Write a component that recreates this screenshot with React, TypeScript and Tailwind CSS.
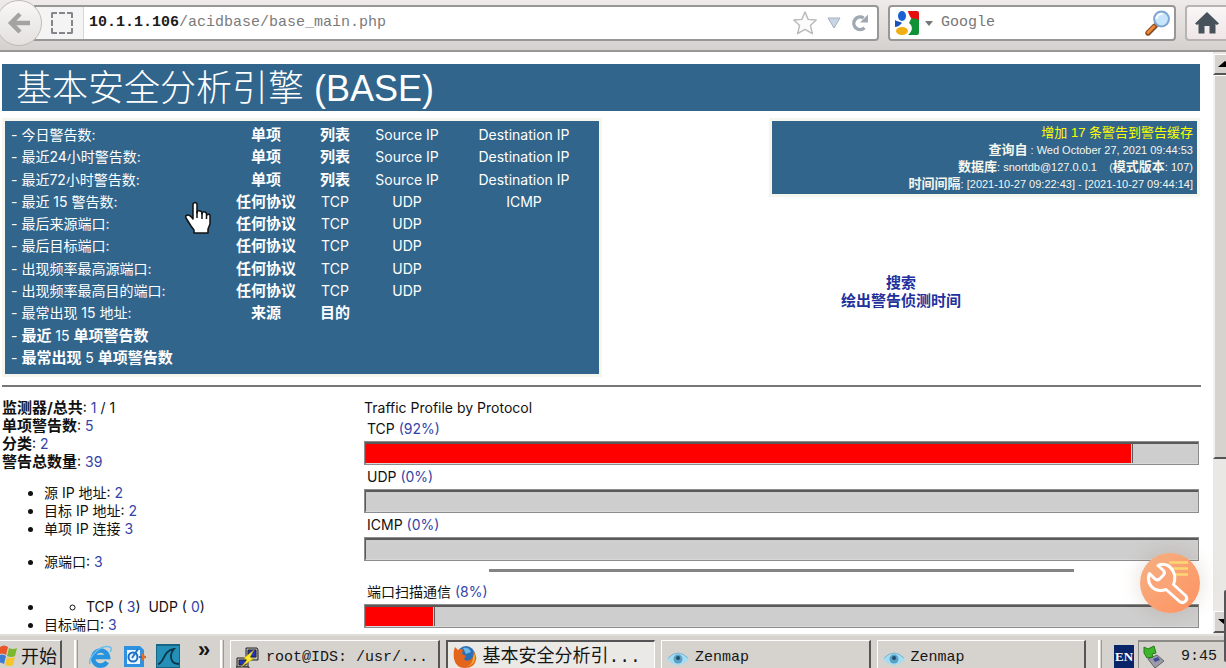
import type { ReactNode } from "react";

type Cell = { text: string; bold?: boolean };

const b = (text: string): Cell => ({ text, bold: true });
const t = (text: string): Cell => ({ text });

const SUMMARY_ROWS: { label: ReactNode; cells: Cell[] }[] = [
  { label: "今日警告数:", cells: [b("单项"), b("列表"), t("Source IP"), t("Destination IP")] },
  { label: "最近24小时警告数:", cells: [b("单项"), b("列表"), t("Source IP"), t("Destination IP")] },
  { label: "最近72小时警告数:", cells: [b("单项"), b("列表"), t("Source IP"), t("Destination IP")] },
  { label: "最近 15 警告数:", cells: [b("任何协议"), t("TCP"), t("UDP"), t("ICMP")] },
  { label: "最后来源端口:", cells: [b("任何协议"), t("TCP"), t("UDP")] },
  { label: "最后目标端口:", cells: [b("任何协议"), t("TCP"), t("UDP")] },
  { label: "出现频率最高源端口:", cells: [b("任何协议"), t("TCP"), t("UDP")] },
  { label: "出现频率最高目的端口:", cells: [b("任何协议"), t("TCP"), t("UDP")] },
  { label: "最常出现 15 地址:", cells: [b("来源"), b("目的")] },
  { label: <a href="#last"><b className="text-[15px]">最近</b> 15 <b className="text-[15px]">单项警告数</b></a>, cells: [] },
  { label: <a href="#freq"><b className="text-[15px]">最常出现</b> 5 <b className="text-[15px]">单项警告数</b></a>, cells: [] },
];

function BackIcon() {
  return (
    <svg viewBox="0 0 24 24" className="h-6 w-6" fill="none" stroke="#a3a3a3" strokeWidth="4.5">
      <path d="M23 12H5M13 3l-9 9 9 9" />
    </svg>
  );
}

function StarIcon() {
  return (
    <svg viewBox="0 0 24 24" className="h-6 w-6" fill="#fbfbfb" stroke="#b9b9bb" strokeWidth="1.4" strokeLinejoin="round">
      <path d="M12 1l3.200 7.400 8 .6-5.800 5.400 2 8.200L12 18.400l-7.400 4.200 2-8.200L.8 9l8-.6z" />
    </svg>
  );
}

function ReloadIcon() {
  return (
    <svg viewBox="0 0 18 18" className="h-[18px] w-[18px]" fill="none">
      <path d="M13.500 13.800A6.300 6.300 0 1 1 12.600 4" stroke="#a0a8b1" strokeWidth="3.400" />
      <path d="M17 .5v8H9z" fill="#a0a8b1" />
    </svg>
  );
}

function GoogleIcon() {
  return (
    <svg viewBox="0 0 24 24" className="h-6 w-6">
      <path d="M13 0h9q2 0 2 2v7h-7c-1-3-3-4-4-9z" fill="#e60f10" />
      <path d="M16 8c3-1 6 0 8 1v13q0 2-2 2h-9c5-4 5-9 1-12z" fill="#0f9236" />
      <path d="M0 9c2 2 5 1 7 3-3 3-5 4-7 4z" fill="#1a51bd" />
      <ellipse cx="7" cy="5" rx="4" ry="5" fill="#1b60d2" />
      <ellipse cx="7" cy="20" rx="6" ry="4" fill="#f0ae12" />
    </svg>
  );
}

function MagnifierIcon() {
  return (
    <svg viewBox="0 0 26 26" className="h-[26px] w-[26px]">
      <path d="M3 23l7-7" stroke="#8a4a20" strokeWidth="5.400" strokeLinecap="round" />
      <path d="M3 22.500l6-6" stroke="#e8893d" strokeWidth="3" strokeLinecap="round" />
      <circle cx="16.500" cy="9" r="7.400" fill="#c8e6fb" stroke="#7fa6d2" strokeWidth="2" />
      <path d="M11.500 9a5 5 0 0 1 6-5" stroke="#fff" strokeWidth="2" fill="none" />
    </svg>
  );
}

function HomeIcon() {
  return (
    <svg viewBox="0 0 24 22" className="h-[22px] w-6" fill="#48525a">
      <path d="M12 0l12 11.500-2 1.500-1.500-1v9.500h-6V14h-5v7.500h-6V12L2 13l-2-1.500z" />
    </svg>
  );
}

function Toolbar() {
  return (
    <header className="flex h-[52px] shrink-0 items-start border-b-2 border-[#9a9693] bg-linear-to-b from-[#eeebea] to-[#d5d1ce]">
      <button aria-label="Back" className="relative z-10 -ml-1 flex h-[46px] w-[46px] shrink-0 items-center justify-center rounded-full border border-[#bdbab8] bg-linear-to-b from-[#f8f7f6] to-[#e4e1df]">
        <BackIcon />
      </button>
      <div className="mt-[5px] -ml-2 flex h-9 flex-1 items-center rounded-r border-2 border-[#989696] bg-white font-['Liberation_Mono',monospace] text-[15px]">
        <div className="flex h-full w-12 shrink-0 items-center justify-end border-r border-[#d8d6d6] bg-[#f5f4f4] pr-[10px]">
          <span className="h-[22px] w-[22px] rounded-xs border-2 border-dashed border-[#85858b]" />
        </div>
        <label htmlFor="url" className="pl-[5px] font-bold text-[#1c1c1c]">10.1.1.106</label>
        <input id="url" defaultValue="/acidbase/base_main.php" className="min-w-0 flex-1 text-[#7b7b7b] outline-none" />
        <div className="flex items-center gap-[10px] pr-2">
          <button aria-label="Bookmark"><StarIcon /></button>
          <button aria-label="History">
            <svg viewBox="0 0 14 12" className="h-3 w-[14px]"><path d="M1 1h12L7 11z" fill="#c9d5e5" stroke="#a4b0c0" /></svg>
          </button>
          <button aria-label="Reload"><ReloadIcon /></button>
        </div>
      </div>
      <div className="mt-[5px] ml-[9px] flex h-9 w-[288px] items-center rounded border-2 border-[#989696] bg-white pr-[3px] pl-[5px] font-['Liberation_Mono',monospace] text-[15px]">
        <GoogleIcon />
        <svg viewBox="0 0 8 5" className="mx-[6px] h-[5px] w-2"><path d="M0 0h8L4 5z" fill="#777" /></svg>
        <input aria-label="Search" placeholder="Google" className="ml-[2px] min-w-0 flex-1 outline-none placeholder:text-[#777]" />
        <button aria-label="Go"><MagnifierIcon /></button>
      </div>
      <button aria-label="Home" className="mt-[5px] ml-[9px] flex h-9 w-[41px] items-center justify-center rounded-l border-2 border-r-0 border-[#b9b4b4] bg-linear-to-b from-[#f8f6f6] to-[#f0e6e8]">
        <HomeIcon />
      </button>
    </header>
  );
}

function SummaryTable() {
  return (
    <div className="w-[600px] shrink-0 border-3 border-[#f5f6ee] bg-[#31658c] pt-[3px] pb-[5px]">
      <table className="h-[245px] w-full table-fixed text-center text-white">
        <colgroup>
          <col className="w-[222px]" />
          <col className="w-[78px]" />
          <col className="w-[60px]" />
          <col className="w-[84px]" />
          <col />
        </colgroup>
        <tbody>
          {SUMMARY_ROWS.map((row, i) => (
            <tr key={i}>
              <td className="pl-[6px] text-left leading-5 whitespace-nowrap">- {row.label}</td>
              {[0, 1, 2, 3].map((c) => {
                const cell = row.cells[c];
                return (
                  <td key={c} className="leading-5 whitespace-nowrap">
                    {cell && <a href="#query" className={cell.bold ? "text-[15px] font-bold" : ""}>{cell.text}</a>}
                  </td>
                );
              })}
            </tr>
          ))}
        </tbody>
      </table>
    </div>
  );
}

function StatusPanel() {
  return (
    <div className="flex flex-1 flex-col items-end pr-px">
      <div className="w-[431px] border-3 border-[#f5f6ee] bg-[#31658c] px-1 pt-[3px] pb-[2px] text-right font-['Liberation_Sans','Noto_Sans_CJK_SC',sans-serif] text-[11px] leading-[17px] text-[#f5f6ee]">
        <p className="h-[17px] text-[13px] text-[#ffff00]">增加 17 条警告到警告缓存</p>
        <p className="h-[17px]"><b className="text-[13px]">查询自</b> : Wed October 27, 2021 09:44:53</p>
        <p className="h-[17px]"><b className="text-[13px]">数据库</b>: snortdb@127.0.0.1 &nbsp; &nbsp;(<b className="text-[13px]">模式版本</b>: 107)</p>
        <p className="h-[17px]"><b className="text-[13px]">时间间隔</b>: [2021-10-27 09:22:43] - [2021-10-27 09:44:14]</p>
      </div>
      <div className="mt-[77px] flex w-full flex-col items-center text-[15px] leading-[18px] font-bold text-[#21309c]">
        <a href="#search">搜索</a>
        <a href="#graph">绘出警告侦测时间</a>
      </div>
    </div>
  );
}

function Num({ children }: { children: ReactNode }) {
  return <a href="#detail" className="text-[#3443a8]">{children}</a>;
}

function Stats() {
  return (
    <div className="w-[362px] shrink-0 leading-[18px]">
      <p><b className="text-[15px]">监测器/总共</b>: <Num>1</Num> / 1</p>
      <p><b className="text-[15px]">单项警告数</b>: <Num>5</Num></p>
      <p><b className="text-[15px]">分类</b>: <Num>2</Num></p>
      <p><b className="text-[15px]">警告总数量</b>: <Num>39</Num></p>
      <ul className="mt-[13px] list-disc pl-[42px]">
        <li>源 IP 地址: <Num>2</Num></li>
        <li>目标 IP 地址: <Num>2</Num></li>
        <li>单项 IP 连接 <Num>3</Num></li>
        <li className="mt-[15px]">源端口: <Num>3</Num></li>
        <li className="mt-[27px]">
          <ul className="list-[circle] pl-[42px]">
            <li>TCP ( <Num>3</Num>) &nbsp;UDP ( <Num>0</Num>)</li>
          </ul>
        </li>
        <li>目标端口: <Num>3</Num></li>
      </ul>
    </div>
  );
}

function Bar({ label, percent }: { label: string; percent: number }) {
  return (
    <div>
      <p className="pl-[3px] leading-6">{label} <Num>({percent}%)</Num></p>
      <div className="h-6 border border-[#8c8c8c] bg-[#cecece]">
        <div className="flex h-full border-t-2 border-b border-l border-t-[#5a5a5a] border-b-[#d8d8d8] border-l-[#5a5a5a]">
          <div className="bg-[#ff0000]" style={{ width: `${percent}%` }} />
          {percent > 0 && <div className="w-[2px] border-r border-l border-r-[#5a5a5a] border-l-[#d8d8d8]" />}
        </div>
      </div>
    </div>
  );
}

function TrafficProfile() {
  return (
    <div className="flex-1 pr-px">
      <h2 className="leading-[18px]">Traffic Profile by Protocol</h2>
      <Bar label="TCP" percent={92} />
      <Bar label="UDP" percent={0} />
      <Bar label="ICMP" percent={0} />
      <hr className="mx-auto mt-2 mb-2 w-7/10 border-t-3 border-[#848484]" />
      <Bar label="端口扫描通信" percent={8} />
    </div>
  );
}

function Scrollbar() {
  return (
    <div className="flex w-[13px] shrink-0 flex-col overflow-hidden bg-[#eae8e4]">
      <div className="mt-[2px] flex h-[21px] items-center justify-end border-t border-b-2 border-l-2 border-t-white border-b-[#555] border-l-[#f4f2f0] bg-[#d6d3ce]">
        <svg viewBox="0 0 8 6" className="h-[6px] w-2"><path d="M7 0l7 6H0z" fill="#000" /></svg>
      </div>
      <div className="h-[384px] border-t border-b-2 border-l-2 border-t-white border-b-[#555] border-l-[#f4f2f0] bg-[#d6d3ce]" />
      <div className="flex-1" />
      <div className="mb-px flex h-[22px] items-center justify-end border-t border-b-2 border-l-2 border-t-white border-b-[#555] border-l-[#f4f2f0] bg-[#d6d3ce]">
        <svg viewBox="0 0 8 6" className="h-[6px] w-2"><path d="M0 0h14L7 6z" fill="#000" /></svg>
      </div>
    </div>
  );
}

function HandCursor() {
  return (
    <svg viewBox="0 0 26 34" className="absolute top-[149px] left-[185px] h-[34px] w-[26px]" fill="#fff" stroke="#111" strokeWidth="1.500" strokeLinejoin="round">
      <path d="M8 3q2-3 4 0v9q0-3 3-2 2 0 2 3 1-3 3-2 2 1 2 3 3-2 3 1v8l-2 5v4H9v-3L6 25l-5-8q-1-3 2-3 2 0 5 4z" />
      <path d="M12 10v7M17 12v6M21.500 13v5" />
    </svg>
  );
}

function ToolButton() {
  return (
    <button aria-label="Tools" className="absolute right-[26px] bottom-[55px] flex h-[60px] w-[60px] items-center justify-center rounded-full bg-linear-to-br from-[#f4b184] to-[#ff915f] shadow-[0_0_20px_rgba(120,80,50,0.2)]">
      <svg viewBox="0 0 60 60" className="h-full w-full" fill="none">
        <path d="M29 9.500h19M33 15.500h15M36 21.500h12" stroke="#fbd873" strokeWidth="2.600" />
        <path
          d="M18 12.500L23 17q2.500 2.500.5 5l-4 4q-2.500 2-5-.5L9.500 20.500C6.500 27 10 34 15.500 36.500q5 2 10.500 0L39.500 48.500c4 3 9-1.500 6.500-5.500L33.500 31.500c2-5 2-9-.5-13.500-3-6-9.500-8.500-15-5.500z"
          fill="#fba478"
          stroke="#fff"
          strokeWidth="3"
          strokeLinejoin="round"
        />
      </svg>
    </button>
  );
}

function WindowsLogo() {
  return (
    <svg viewBox="0 0 22 22" className="-ml-1 h-[22px] w-[22px] shrink-0">
      <path d="M4 3q4-3 8 0l-2 8q-4-3-8 0z" fill="#e8562a" />
      <path d="M13 4q4 2 8 0l-2 8q-4 2-8 0z" fill="#7bb82e" />
      <path d="M2 12q4-3 8 0l-2 8q-4-3-8 0z" fill="#3b7bd4" />
      <path d="M11 13q4 2 8 0l-2 8q-4 2-8 0z" fill="#f6c52c" />
    </svg>
  );
}

function ExplorerIcon() {
  return (
    <svg viewBox="0 0 24 24" className="h-6 w-6" fill="none">
      <path d="M19 18a7.500 7.500 0 1 1 1-5H7" stroke="#2794df" strokeWidth="4.500" />
      <path d="M2 20C0 13 13 0 22 3c2 1 1 4 0 5" stroke="#67c0f2" strokeWidth="1.600" />
    </svg>
  );
}

function OutlookIcon() {
  return (
    <svg viewBox="0 0 24 24" className="h-6 w-6">
      <path d="M2 2h16l4 4v17H2z" fill="#2f91df" />
      <path d="M5 6h13v14H5z" fill="#eef7ff" />
      <circle cx="11" cy="13" r="4.500" fill="none" stroke="#1b6ec3" strokeWidth="2" />
      <path d="M10 14l6-9M17 13h7" stroke="#2876bd" strokeWidth="2" />
      <path d="M20 9l4 4-4 4z" fill="#e56a30" />
    </svg>
  );
}

function SharkIcon() {
  return (
    <svg viewBox="0 0 24 24" className="h-6 w-6">
      <path d="M0 1h24v23H0z" fill="#2490b8" stroke="#176585" strokeWidth="2" />
      <path d="M2 20c6 0 5-14 16-15-5 6-4 15 5 15" fill="none" stroke="#0b3548" strokeWidth="1.800" />
    </svg>
  );
}

function PuttyIcon() {
  return (
    <svg viewBox="0 0 24 24" className="h-6 w-6 shrink-0" stroke="#222">
      <path d="M10 1h11l1 2v10H10zM1 11h11v9H1z" fill="#bbb" />
      <path d="M12 3h8v7h-8zM3 13h7v5H3z" fill="#2433b8" />
      <path d="M0 20h13v3H0z" fill="#ddd" />
      <path d="M18 3l-10 8 3 2-6 7 12-8-3-2z" fill="#ffe92e" stroke="#b9a300" strokeWidth=".5" />
    </svg>
  );
}

function FirefoxIcon() {
  return (
    <svg viewBox="0 0 24 24" className="h-6 w-6 shrink-0">
      <circle cx="13" cy="10" r="9" fill="#2c6fb5" />
      <path d="M10 3q6-1 8 4l-5 2z" fill="#6db8e8" />
      <path d="M2 2l3 3q3-2 5 0l-1 4 4 2-2 3q2 3 6 1 5-3 3-9 4 4 3 9-2 8-11 8T1 14Q0 7 2 2z" fill="#e3641b" />
      <path d="M21 8q4 12-9 14 8-2 8-9z" fill="#f7b22d" />
    </svg>
  );
}

function EyeIcon() {
  return (
    <svg viewBox="0 0 22 14" className="h-[14px] w-[22px] shrink-0">
      <path d="M0 7Q11-5 22 7 11 19 0 7z" fill="#a4dcf4" />
      <path d="M1 6Q11-4 21 6" fill="none" stroke="#79b4d0" />
      <circle cx="11" cy="7" r="4.500" fill="#5a9fc4" />
      <circle cx="11" cy="6" r="2" fill="#1f506d" />
    </svg>
  );
}

function Divider() {
  return <div className="h-full w-1 shrink-0 border-l-2 border-r border-l-white border-r-[#999]" />;
}

const TASKS = [
  { icon: <PuttyIcon />, title: "root@IDS: /usr/..." },
  { icon: <FirefoxIcon />, title: "基本安全分析引...", active: true },
  { icon: <EyeIcon />, title: "Zenmap" },
  { icon: <EyeIcon />, title: "Zenmap" },
];

function Taskbar() {
  return (
    <footer className="flex h-[34px] shrink-0 items-stretch overflow-hidden border-t-2 border-[#e2dfda] bg-[#d6d3ce] pt-1 font-['Liberation_Mono','Noto_Sans_CJK_SC',monospace] text-[15px] text-[#161616]">
      <button className="flex w-[62px] shrink-0 items-center border-t border-r-2 border-t-white border-r-[#555] font-['Noto_Sans_CJK_SC',sans-serif] text-[18px] leading-6 whitespace-nowrap">
        <WindowsLogo />
        <span className="ml-[3px]">开始</span>
      </button>
      <div className="ml-3 flex gap-[10px]">
        <Divider />
        <button aria-label="Internet Explorer" className="mt-1"><ExplorerIcon /></button>
        <button aria-label="Outlook" className="mt-1"><OutlookIcon /></button>
        <button aria-label="Wireshark" className="mt-1"><SharkIcon /></button>
        <button className="ml-1 w-5 pb-1 text-[22px] leading-5 font-bold">»</button>
      </div>
      <div className="ml-[6px] flex flex-1 gap-[6px]">
        <Divider />
        {TASKS.map((task, i) => (
          <button
            key={i}
            className={
              task.active
                ? "flex flex-1 items-center gap-[6px] border-t-2 border-r border-l-2 border-t-[#555] border-r-white border-l-[#555] bg-[#ebe9e6] pt-1 pl-[5px] text-[18px] leading-6 whitespace-nowrap"
                : "flex flex-1 items-center gap-[6px] border-t border-r-2 border-l border-t-white border-r-[#555] border-l-white pt-2 pl-[5px] whitespace-nowrap"
            }
          >
            {task.icon}
            <span>{task.title}</span>
          </button>
        ))}
      </div>
      <div className="ml-3 flex">
        <Divider />
        <span className="mt-[5px] ml-3 h-6 w-5 bg-[#0a246a] text-center font-['Liberation_Serif',serif] text-[13px] leading-6 font-bold text-white">EN</span>
        <div className="ml-1 flex w-[88px] items-center border-t-2 border-l border-[#8c8a86] pt-1 pl-1">
          <svg viewBox="0 0 22 24" className="h-6 w-[22px]">
            <path d="M5 14l9-4 7 6-9 7z" fill="#9a9aa8" stroke="#666" />
            <path d="M10 14l5-2 2 3-5 2z" fill="#414d94" />
            <path d="M1 2l4 2 6-3 2 7-4 1 1 3-6 1-3-5z" fill="#3fb52b" stroke="#217c15" />
          </svg>
          <span className="ml-4">9:45</span>
        </div>
      </div>
    </footer>
  );
}

export default function App() {
  return (
    <div className="relative flex h-screen flex-col overflow-hidden bg-white font-['Inter','Noto_Sans_CJK_SC',sans-serif] text-[14px] text-[#111]">
      <Toolbar />
      <div className="flex min-h-0 flex-1">
        <main className="relative min-w-0 flex-1 overflow-hidden pt-3 pr-3 pl-[2px]">
          <h1 className="mr-px h-[47px] bg-[#31658c] pl-[14px] font-['Liberation_Sans','Noto_Sans_CJK_SC',sans-serif] text-[36px] leading-[49px] font-light whitespace-nowrap text-white">
            基本安全分析引擎 (BASE)
          </h1>
          <div className="mt-[7px] flex">
            <SummaryTable />
            <StatusPanel />
          </div>
          <hr className="mt-2 border-t-2 border-[#777]" />
          <div className="mt-3 flex pr-px">
            <Stats />
            <TrafficProfile />
          </div>
          <HandCursor />
        </main>
        <Scrollbar />
      </div>
      <Taskbar />
      <ToolButton />
      <div className="absolute right-0 bottom-[6px] h-[72px] w-[2px] rounded-l bg-[#55555a]" />
    </div>
  );
}
